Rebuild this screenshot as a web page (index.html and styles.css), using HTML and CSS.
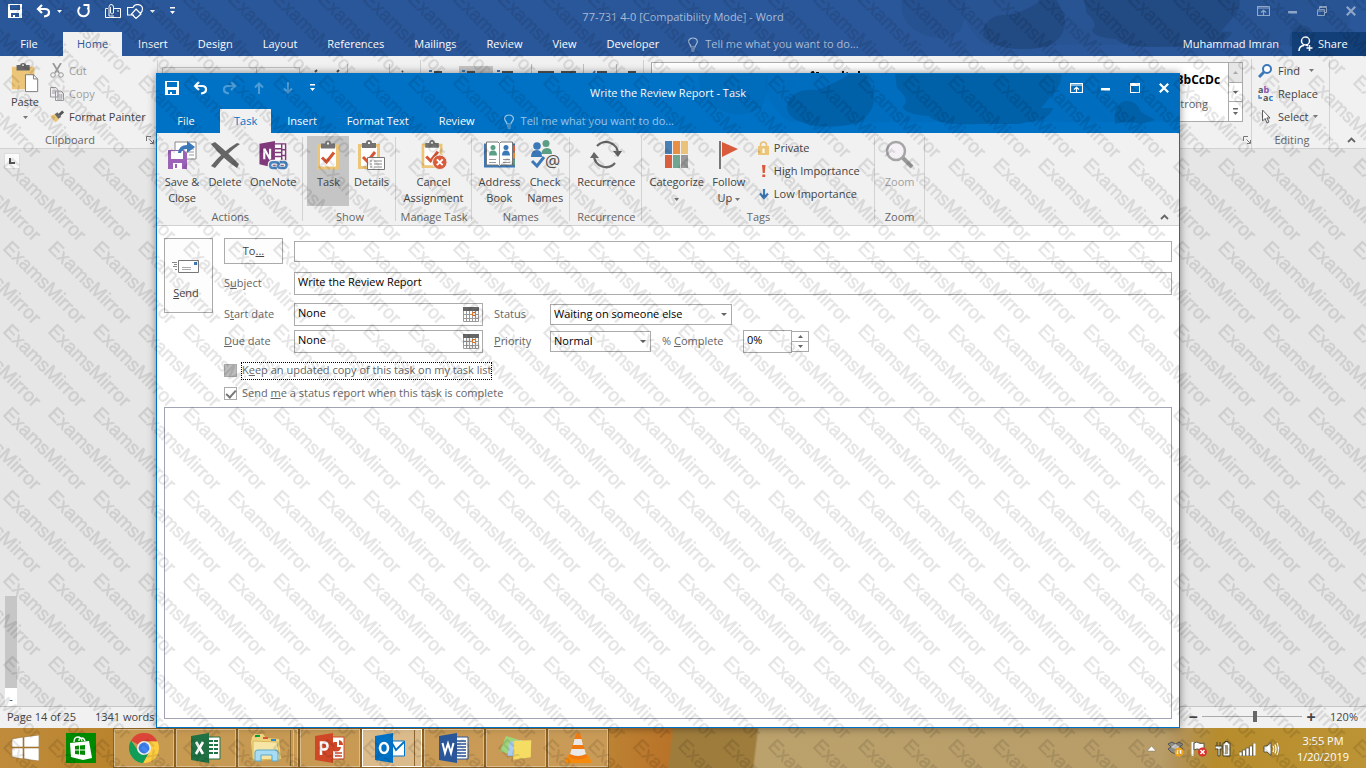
FILE: index.html
```html
<!DOCTYPE html>
<html lang="en">
<head>
<meta charset="utf-8">
<title>Write the Review Report - Task</title>
<link rel="stylesheet" href="styles.css">
</head>
<body>
<svg class="defs" aria-hidden="true">
  <defs>
    <symbol id="i-art" viewBox="0 0 490 60">
      <path d="M10 0H78Q80 20 72 34Q50 46 32 36Q8 28 10 0Z" opacity=".35"/>
      <path d="M98 30Q104 14 128 16Q150 8 160 0H176Q190 22 182 36Q176 46 166 50Q130 56 112 48Q96 42 98 30Z"/>
      <path d="M206 0H372Q374 10 362 22L352 34H364Q362 42 350 46L330 50H290Q250 52 240 42Q214 40 214 32Q222 26 208 14Z"/>
      <path d="M426 50Q424 30 436 27Q448 26 452 38L466 46L452 50Q438 46 426 50Z"/>
      <path d="M78 0H490V48H100Q70 24 78 0Z" opacity=".25"/>
    </symbol>
    <symbol id="i-save" viewBox="0 0 14 14">
      <path d="M0 0H14V14H0ZM2 1V6H12V1ZM3 9V13H5V11H7V13H11V9Z" fill="currentColor" fill-rule="evenodd"/>
    </symbol>
    <symbol id="i-undo" viewBox="0 0 15 14">
      <path d="M2 5H9Q13 5 13 8.500Q13 12 8 12.500M6 1L2 5L6 9" fill="none" stroke="currentColor" stroke-width="2.200"/>
    </symbol>
    <symbol id="i-down" viewBox="0 0 5 3"><path d="M0 0H5L2.500 3Z" fill="currentColor"/></symbol>
    <symbol id="i-more" viewBox="0 0 7 8"><path d="M1 0H6V1.500H1ZM1 4H6L3.500 7Z" fill="currentColor"/></symbol>
    <symbol id="i-bulb" viewBox="0 0 12 15">
      <path d="M4 10Q4 8.500 2.500 7Q1 5 2 3Q3 1 6 1Q9 1 10 3Q11 5 9.500 7Q8 8.500 8 10ZM4 12H8M4.500 14H7.500" fill="none" stroke="currentColor" stroke-width="1.200"/>
    </symbol>
    <symbol id="i-ribbon" viewBox="0 0 13 10">
      <path d="M.5.5H12.500V9.500H.5ZM.5 2H12.500M6.500 9V4.500M4 6.500L6.500 4.200L9 6.500" fill="none" stroke="currentColor" stroke-width="1.200"/>
    </symbol>
    <symbol id="i-min" viewBox="0 0 10 10"><path d="M0 5H9V7.500H0Z" fill="currentColor"/></symbol>
    <symbol id="i-close" viewBox="0 0 10 10"><path d="M.8.8L9.200 9.200M9.200.8L.8 9.200" stroke="currentColor" stroke-width="2.200"/></symbol>
    <symbol id="i-up" viewBox="0 0 9 6"><path d="M1 5L4.500 1.500L8 5" fill="none" stroke="#666" stroke-width="1.800"/></symbol>
    <symbol id="i-launch" viewBox="0 0 8 8"><path d="M.5 5V.5H5M3.500 3.500L7 7M7.500 4V7.500H4" fill="none" stroke="#777"/></symbol>
    <symbol id="i-clip" viewBox="0 0 22 29">
      <path d="M0 4H22V29H0Z" fill="#ecc579"/><path d="M3 7H19V26H3Z" fill="#fff"/>
      <path d="M4 3H8Q8 0 11 0Q14 0 14 3H18V8H4Z" fill="#737373"/><path d="M10 2H12V4H10Z" fill="#eee"/>
      <path d="M5 17L9.500 21.500L17 12" fill="none" stroke="#d65532" stroke-width="3"/>
    </symbol>
    <symbol id="i-cal" viewBox="0 0 16 15">
      <path d="M0 0H16V15H0Z" fill="#fff"/><path d="M0 0H16V4H0Z" fill="#666"/>
      <path d="M.5 4V14.500H15.500V4M3.500 4V14M6.500 4V14M9.500 4V14M12.500 4V14M1 7.500H15M1 11.500H15" fill="none" stroke="#999"/>
      <path d="M9.500 5.500H12.500V8.500H9.500Z" fill="#fff" stroke="#e0701e"/>
    </symbol>
    <g id="mark"><text transform="rotate(45)">ExamsMirror</text></g>
    <pattern id="marks" width="45" height="83" patternUnits="userSpaceOnUse">
      <use href="#mark" x="2" y="0"/><use href="#mark" x="-43" y="0"/><use href="#mark" x="-88" y="0"/><use href="#mark" x="47" y="0"/>
      <use href="#mark" x="2" y="83"/><use href="#mark" x="-43" y="83"/><use href="#mark" x="-88" y="83"/><use href="#mark" x="47" y="83"/>
    </pattern>
  </defs>
</svg>

<div class="desktop">
  <div class="word">
    <header class="app-head word-head">
      <svg class="art"><use href="#i-art"/></svg>
      <div class="titlebar word-title">
        <div class="quick word-quick">
          <button aria-label="Save"><svg width="14" height="14"><use href="#i-save"/></svg></button>
          <button aria-label="Undo"><svg width="15" height="14"><use href="#i-undo"/></svg><svg width="5" height="3"><use href="#i-down"/></svg></button>
          <button aria-label="Repeat"><svg width="15" height="14" viewBox="0 0 15 14"><path d="M4 3A5.300 5.300 0 1 0 11.500 3.500M7.500 1H12.500V6" fill="none" stroke="currentColor" stroke-width="2"/></svg></button>
          <span class="pair">
            <button aria-label="Attach"><svg width="16" height="14" viewBox="0 0 16 14"><path d="M3 4.500H.5V13.500H15.500V4.500H9M12 7H14M4 12V3Q4 .5 6 .5Q8.500.5 8.500 3V8Q8.500 10 7 10Q5.500 10 5.500 8V3M4 12H9" fill="none" stroke="currentColor"/></svg></button>
            <button aria-label="Shapes"><svg width="17" height="15" viewBox="0 0 17 15"><path d="M7 11H.5V3.500H6M6 3.500Q7 .5 10.500.5Q15.500 1 15.500 5Q15.500 8 13 9.500M9 5L14 10L9 14.500L4.500 10Z" fill="none" stroke="currentColor" stroke-width="1.200"/></svg><svg width="5" height="3"><use href="#i-down"/></svg></button>
          </span>
          <button aria-label="Customize toolbar"><svg width="7" height="8"><use href="#i-more"/></svg></button>
        </div>
        <div class="caption word-caption">77-731 4-0 [Compatibility Mode] - Word</div>
        <div class="controls word-controls">
          <button aria-label="Ribbon options"><svg width="13" height="10"><use href="#i-ribbon"/></svg></button>
          <button aria-label="Minimize"><svg width="10" height="10"><use href="#i-min"/></svg></button>
          <button aria-label="Restore"><svg width="10" height="10" viewBox="0 0 10 10"><path d="M.5 3.500H7.500V9.500H.5ZM.5 5H7.500M2.500 3V.5H9.500V6.500H8M2.500 1.500H9.500" fill="none" stroke="currentColor"/></svg></button>
          <button aria-label="Close"><svg width="10" height="10"><use href="#i-close"/></svg></button>
        </div>
      </div>
      <nav class="tabs">
        <button class="file">File</button>
        <button class="on word-on">Home</button><button>Insert</button><button>Design</button><button>Layout</button><button>References</button><button>Mailings</button><button>Review</button><button>View</button><button>Developer</button>
        <button class="tell word-tell"><svg width="12" height="15"><use href="#i-bulb"/></svg>Tell me what you want to do...</button>
        <span class="user">Muhammad Imran</span>
        <button class="share"><svg width="16" height="16" viewBox="0 0 16 16"><circle cx="7.500" cy="5" r="4" fill="none" stroke="#fff" stroke-width="1.500"/><path d="M1 15Q1 10 6 9.500M8 9Q9 9 10 10M11.500 9V15M8.500 12H14.500" fill="none" stroke="#fff" stroke-width="1.500"/></svg>Share</button>
      </nav>
    </header>

    <section class="word-ribbon">
      <div class="group clip-group">
        <div class="group-body">
          <button class="big paste"><svg width="30" height="32" viewBox="0 0 30 32"><path d="M1 4H25V28H1Z" fill="#ecc579"/><path d="M6 2H10Q10 0 13 0Q16 0 16 2H20V8H6Z" fill="#666"/><path d="M12 1.500H14V3H12Z" fill="#fff"/><path d="M15.500 12.500H24L28.500 17V30.500H15.500Z" fill="#fff" stroke="#777"/><path d="M24 12V17H28" fill="none" stroke="#777"/></svg><span>Paste</span><svg class="arrow" width="5" height="3"><use href="#i-down"/></svg></button>
          <div class="rows">
            <button class="dim"><svg width="14" height="15" viewBox="0 0 14 15"><path d="M3 0L9 10M11 0L5 10" stroke="#999" stroke-width="1.800"/><circle cx="3" cy="12" r="2.300" fill="none" stroke="#999"/><circle cx="11" cy="12" r="2.300" fill="none" stroke="#999"/></svg>Cut</button>
            <button class="dim"><svg width="14" height="14" viewBox="0 0 14 14"><path d="M.5.5H6L8 3V10H.5ZM5.500 4H11L13.500 6.500V13.500H5.500Z" fill="#f1eff3" stroke="#999"/><path d="M2 4H5M2 6H5M7 8H12M7 10H12M7 12H12" stroke="#999"/></svg>Copy</button>
            <button><svg width="14" height="13" viewBox="0 0 15 13"><path d="M0 6L5 4L10 9L6 13Z" fill="#ecc579"/><path d="M5 4L8 2L12 7L9 9Z" fill="#666"/><path d="M10 5L14 1" stroke="#555" stroke-width="3"/></svg>Format Painter</button>
          </div>
        </div>
        <div class="group-name">Clipboard<svg class="launch" width="8" height="8"><use href="#i-launch"/></svg></div>
      </div>
      <svg class="strip" width="486" height="20" viewBox="0 0 486 20"><path d="M301 10H335V20H301Z" fill="#c5c5c5"/><path d="M4.500 20V11.500H141.500V20M98.500 11V20M189.500 8V20M231.500 8V20M373.500 8V20M425.500 8V20M458.500 8V20" fill="none" stroke="#c0c0c0"/><path d="M262.500 4V20M485.500 4V20" stroke="#d0d0d0"/><path d="M271 15H274M304 15H307M339 15H342M437 15L435 18" stroke="#4078b8" stroke-width="2"/><path d="M276 16H284M309 16H317M344 16H355M380 16H396M403 16H418M439 16H449M470 16H478M157 16L159 14M179 16L181 14M244 16L245 15" stroke="#555" stroke-width="2"/></svg>
      <div class="gallery">
        <svg class="peek-text" width="60" height="6" viewBox="0 0 60 6"><path d="M1 2L3 1L5 4M7 4V2H9M33 0V6M36 3L38 2M49 0V6" fill="none" stroke="#111" stroke-width="2"/></svg>
        <div class="style-item"><b>AaBbCcDc</b><span>Strong</span></div>
        <div class="gallery-nav"><button class="off" aria-label="Previous styles"><svg class="flip" width="5" height="3"><use href="#i-down"/></svg></button><button aria-label="Next styles"><svg width="5" height="3"><use href="#i-down"/></svg></button><button aria-label="All styles"><svg width="7" height="8"><use href="#i-more"/></svg></button></div>
      </div>
      <div class="styles-end"><svg width="8" height="8"><use href="#i-launch"/></svg></div>
      <div class="group edit-group">
        <div class="group-body"><div class="rows">
          <button><svg width="15" height="14" viewBox="0 0 15 14"><circle cx="9" cy="5" r="4" fill="#fff" stroke="#3b78b8" stroke-width="2"/><path d="M6 8L1 13" stroke="#3b78b8" stroke-width="3"/></svg>Find <svg class="arrow gap" width="5" height="3"><use href="#i-down"/></svg></button>
          <button><svg width="15" height="17" viewBox="0 0 15 17"><text x="0" y="8" class="tiny">a<tspan fill="#8a4fb0">b</tspan></text><text x="5" y="16" class="tiny">a<tspan fill="#3b78b8">c</tspan></text><path d="M1 10V13H4" fill="none" stroke="#3b78b8" stroke-width="1.300"/></svg>Replace</button>
          <button><svg width="15" height="15" viewBox="0 0 15 15"><path d="M4.500 1V12L7 9.500L9 14L11 13L9 9H12Z" fill="#fff" stroke="#666"/></svg>Select<svg class="arrow" width="5" height="3"><use href="#i-down"/></svg></button>
        </div></div>
        <div class="group-name">Editing</div>
      </div>
      <button class="fold" aria-label="Collapse the ribbon"><svg width="9" height="6"><use href="#i-up"/></svg></button>
    </section>

    <main class="document">
      <div class="ruler-corner"><svg width="6" height="6" viewBox="0 0 6 6"><path d="M1 0V5H6" fill="none" stroke="#555" stroke-width="2"/></svg></div>
      <div class="v-ruler"><div class="v-margin"></div><div class="v-page">-</div></div>
    </main>
    <footer class="status">
      <span>Page 14 of 25</span><span>1341 words</span>
      <div class="zoomer"><button aria-label="Zoom out">−</button><input type="range" aria-label="Zoom" min="0" max="100" value="53"><button aria-label="Zoom in">+</button><span>120%</span></div>
    </footer>
  </div>

  <section class="task-window">
    <header class="app-head task-head">
      <svg class="art"><use href="#i-art"/></svg>
      <div class="titlebar task-title">
        <div class="quick task-quick">
          <button aria-label="Save"><svg width="14" height="14"><use href="#i-save"/></svg></button>
          <button aria-label="Undo"><svg width="15" height="14"><use href="#i-undo"/></svg></button>
          <button class="faint" aria-label="Redo"><svg class="mirror" width="15" height="14"><use href="#i-undo"/></svg></button>
          <button class="faint" aria-label="Previous item"><svg width="10" height="12" viewBox="0 0 10 12"><path d="M5 12V2M1 5.500L5 1.500L9 5.500" fill="none" stroke="currentColor" stroke-width="2"/></svg></button>
          <button class="faint" aria-label="Next item"><svg width="10" height="12" viewBox="0 0 10 12"><path d="M5 0V10M1 6.500L5 10.500L9 6.500" fill="none" stroke="currentColor" stroke-width="2"/></svg></button>
          <button class="narrow" aria-label="Customize toolbar"><svg width="7" height="8"><use href="#i-more"/></svg></button>
        </div>
        <div class="caption">Write the Review Report - Task</div>
        <div class="controls">
          <button aria-label="Ribbon options"><svg width="13" height="10"><use href="#i-ribbon"/></svg></button>
          <button aria-label="Minimize"><svg width="10" height="10"><use href="#i-min"/></svg></button>
          <button aria-label="Maximize"><svg width="10" height="10" viewBox="0 0 10 10"><path d="M0 0H10V10H0ZM1 3V9H9V3Z" fill="currentColor" fill-rule="evenodd"/></svg></button>
          <button aria-label="Close"><svg width="10" height="10"><use href="#i-close"/></svg></button>
        </div>
      </div>
      <nav class="tabs">
        <button class="file">File</button>
        <button class="on task-on">Task</button><button>Insert</button><button>Format Text</button><button>Review</button>
        <button class="tell task-tell"><svg width="12" height="15"><use href="#i-bulb"/></svg>Tell me what you want to do...</button>
      </nav>
    </header>

    <section class="task-ribbon">
      <div class="group">
        <div class="group-body">
          <button class="big"><svg width="30" height="30" viewBox="0 0 30 30"><path d="M8 2H29V19H8Z" fill="#fff" stroke="#888"/><path d="M19 12H27M22 15H27M22 9H27" stroke="#999"/><path d="M1 10H17L20 13V29H1Z" fill="#9b62b8"/><path d="M4 11H16V19H4Z" fill="#fff"/><path d="M6 23H15V29H6Z" fill="#fff"/><path d="M8 24H10V28H8Z" fill="#9b62b8"/><path d="M11 13Q12 5 20 5V1L28 7L20 13V9Q15 9 14 13Z" fill="#3b78b8"/></svg><span>Save &amp;<br>Close</span></button>
          <button class="big"><svg width="30" height="30" viewBox="0 0 30 30"><path d="M1 4L5 2Q15 10 29 24L27 28Q12 18 1 4Z" fill="#666"/><path d="M27 3L30 4Q16 14 5 28L1 26Q12 12 27 3Z" fill="#666"/></svg><span>Delete</span></button>
          <button class="big"><svg width="30" height="31" viewBox="0 0 30 31"><path d="M14 4H28V26H14Z" fill="#fff" stroke="#80397b" stroke-width="1.500"/><path d="M17 9H24M17 13H24M17 17H24M24 4V24M24 10H28M24 16H28" stroke="#80397b" stroke-width="1.500"/><path d="M1 4L17 1V29L1 25Z" fill="#80397b"/><path d="M6 20V9L12 20V9" fill="none" stroke="#fff" stroke-width="2.200"/><path d="M19 29H15Q12 29 12 26Q12 23 15 23H18Q21 23 21 26M20 26Q20 29 23 29H26Q29 29 29 26Q29 23 26 23H22" fill="none" stroke="#f1f1f1" stroke-width="5"/><path d="M19 29H15Q12 29 12 26Q12 23 15 23H18Q21 23 21 26M20 26Q20 29 23 29H26Q29 29 29 26Q29 23 26 23H22" fill="none" stroke="#4a83bd" stroke-width="2.500"/></svg><span>OneNote</span></button>
        </div><div class="group-name">Actions</div>
      </div>
      <div class="group">
        <div class="group-body">
          <button class="big pressed" aria-pressed="true"><svg width="22" height="29"><use href="#i-clip"/></svg><span>Task</span></button>
          <button class="big"><svg width="30" height="30" viewBox="0 0 30 30"><use href="#i-clip" x="2" width="22" height="29"/><path d="M11.500 17.500H28.500V29.500H11.500Z" fill="#fff" stroke="#777"/><path d="M14 21H16M14 24H16M14 27H16M18 21H26M18 24H26M18 27H26" stroke="#888"/></svg><span>Details</span></button>
        </div><div class="group-name">Show</div>
      </div>
      <div class="group">
        <div class="group-body">
          <button class="big"><svg width="30" height="31" viewBox="0 0 30 31"><use href="#i-clip" x="3" width="22" height="29"/><circle cx="22" cy="23" r="7.500" fill="#d95b3c" stroke="#f1f1f1"/><path d="M19 20L25 26M25 20L19 26" stroke="#fff" stroke-width="2"/></svg><span>Cancel<br>Assignment</span></button>
        </div><div class="group-name">Manage Task</div>
      </div>
      <div class="group">
        <div class="group-body">
          <button class="big"><svg width="31" height="29" viewBox="0 0 31 29"><path d="M0 3H31V27H0Z" fill="#3b78b8"/><path d="M28 5H31V11H28Z" fill="#d95b3c"/><path d="M28 12H31V18H28Z" fill="#e8872e"/><path d="M28 19H31V25H28Z" fill="#5a9e85"/><path d="M2.500 1.500H14L15.500 3L17 1.500H28.500V24.500H17L15.500 26L14 24.500H2.500Z" fill="#fff" stroke="#777"/><path d="M15.500 3V25M5 19H12M5 22H12M19 19H26M19 22H26" stroke="#999"/><circle cx="9" cy="7" r="2.500" fill="#5a9e85"/><path d="M5 15Q5 10 9 10Q13 10 13 15Z" fill="#5a9e85"/><circle cx="22" cy="7" r="2.500" fill="#3b78b8"/><path d="M18 15Q18 10 22 10Q26 10 26 15Z" fill="#3b78b8"/></svg><span>Address<br>Book</span></button>
          <button class="big"><svg width="31" height="30" viewBox="0 0 31 30"><circle cx="16" cy="3.500" r="3.500" fill="#5a9e85"/><path d="M11 14Q12 8 17 8Q22 8 22 14Z" fill="#5a9e85"/><circle cx="7" cy="6" r="3.800" fill="#3b78b8"/><path d="M1 17Q1 10 7 10Q12 10 12 17Z" fill="#3b78b8"/><path d="M2 21L7 26L14 17" fill="none" stroke="#3b78b8" stroke-width="3"/><text x="15" y="27" class="at">@</text></svg><span>Check<br>Names</span></button>
        </div><div class="group-name">Names</div>
      </div>
      <div class="group">
        <div class="group-body">
          <button class="big"><svg width="32" height="30" viewBox="0 0 32 30"><path d="M7 6A12 12 0 0 1 28 14M25 23A12 12 0 0 1 4 16" fill="none" stroke="#666" stroke-width="2.300"/><path d="M23 11L28 17L32 11ZM0 18L4 12L9 18Z" fill="#666"/></svg><span>Recurrence</span></button>
        </div><div class="group-name">Recurrence</div>
      </div>
      <div class="group tags-group">
        <div class="group-body">
          <button class="big"><svg width="23" height="28" viewBox="0 0 23 28"><path d="M0 0H7V13H0Z" fill="#4a80b8"/><path d="M8 0H15V13H8Z" fill="#e88f45"/><path d="M16 0H23V13H16Z" fill="#ebc27a"/><path d="M0 14H7V27H0Z" fill="#d6603f"/><path d="M8 14H15V27H8Z" fill="#6fa591"/><path d="M16 14H23V27H16Z" fill="#999"/></svg><span>Categorize<br><svg class="arrow" width="5" height="3"><use href="#i-down"/></svg></span></button>
          <button class="big"><svg width="22" height="28" viewBox="0 0 22 28"><path d="M1 0H3V28H1Z" fill="#777"/><path d="M4 1L20 8L4 16Z" fill="#d95b3c"/></svg><span>Follow<br>Up <svg class="arrow" width="5" height="3"><use href="#i-down"/></svg></span></button>
          <div class="rows">
            <button><svg width="11" height="14" viewBox="0 0 11 14"><path d="M2.500 7V4Q2.500 1 5.500 1Q8.500 1 8.500 4V7" fill="none" stroke="#e9bf73" stroke-width="1.500"/><path d="M0 5H11V14H0Z" fill="#ecc579"/><path d="M4.500 7.500H6.500V12H4.500Z" fill="#fff"/></svg>Private</button>
            <button><svg width="11" height="14" viewBox="0 0 11 14"><path d="M4 1H7.500L6.800 9H4.700ZM4.300 10.500H7.200V13H4.300Z" fill="#d95b3c"/></svg>High Importance</button>
            <button><svg width="11" height="14" viewBox="0 0 11 14"><path d="M6 2V11M2 6.500L6 11L10 6.500" fill="none" stroke="#3b78b8" stroke-width="2.200"/></svg>Low Importance</button>
          </div>
        </div><div class="group-name">Tags</div>
      </div>
      <div class="group">
        <div class="group-body">
          <button class="big dim"><svg width="30" height="30" viewBox="0 0 30 30"><path d="M17 17L27 27" stroke="#999" stroke-width="4"/><circle cx="11" cy="11" r="9" fill="#f4f0f6" stroke="#a5a5a5" stroke-width="2.500"/></svg><span>Zoom</span></button>
        </div><div class="group-name">Zoom</div>
      </div>
      <button class="fold" aria-label="Collapse the ribbon"><svg width="9" height="6"><use href="#i-up"/></svg></button>
    </section>

    <form class="task-form">
      <div class="head">
        <button type="button" class="send"><svg width="28" height="15" viewBox="0 0 28 15"><path d="M6.500 1.500H26.500V13.500H6.500Z" fill="#fff" stroke="#777"/><path d="M22 3H25V6H22Z" fill="#3b78b8"/><path d="M10 8.500H19M10 10.500H19" stroke="#aaa"/><path d="M0 3.500H5M2 5.500H5M1 7.500H5M3 10.500H5" stroke="#888"/></svg><span><u>S</u>end</span></button>
        <div class="fields">
          <div class="line line-to"><button type="button" class="to">To<u>...</u></button><input class="wide to-input" aria-label="To"></div>
          <div class="line line-gap"><label for="subject">S<u>u</u>bject</label><input class="wide" id="subject" value="Write the Review Report"></div>
          <div class="line line-gap"><label for="start">S<u>t</u>art date</label><span class="date"><input id="start" value="None"><button type="button" aria-label="Pick start date"><svg width="16" height="15"><use href="#i-cal"/></svg></button></span><label class="second" for="status">Status</label><span class="drop drop-long"><select id="status"><option>Waiting on someone else</option><option>Not Started</option></select></span></div>
          <div class="line line-near"><label for="due"><u>D</u>ue date</label><span class="date"><input id="due" value="None"><button type="button" aria-label="Pick due date"><svg width="16" height="15"><use href="#i-cal"/></svg></button></span><label class="second" for="priority"><u>P</u>riority</label><span class="drop"><select id="priority"><option>Normal</option><option>High</option></select></span><label class="percent" for="complete">% <u>C</u>omplete</label><input class="amount" id="complete" value="0%"><span class="spin"><button type="button" aria-label="More"><svg class="flip" width="5" height="3"><use href="#i-down"/></svg></button><button type="button" aria-label="Less"><svg width="5" height="3"><use href="#i-down"/></svg></button></span></div>
          <div class="check check-first"><input type="checkbox" id="keep" class="mixed"><label for="keep" class="focus">K<u>e</u>ep an updated copy of this task on my task list</label></div>
          <div class="check"><input type="checkbox" id="report" checked><label for="report">Send <u>m</u>e a status report when this task is complete</label></div>
        </div>
      </div>
      <textarea class="notes" aria-label="Notes"></textarea>
    </form>
  </section>
</div>

<footer class="taskbar">
  <button class="plain start" aria-label="Start"><svg width="27" height="26" viewBox="0 0 27 26"><path d="M0 4L11 2V12H0ZM12 2L27 0V12H12ZM0 13H11V24L0 22ZM12 13H27V26L12 24Z" fill="#fff" stroke="#8a5b1c" stroke-width=".5"/></svg></button>
  <button class="plain store" aria-label="Store"><svg width="30" height="30" viewBox="0 0 30 30"><path d="M0 0H30V30H0Z" fill="#008a00"/><path d="M4 10L23 8L26 25L17 27L5 24Z" fill="#fff"/><path d="M8 9Q8 4 12 4Q15 4 16 8M13 8Q13 4 16 5Q18 5 19 8" fill="none" stroke="#fff" stroke-width="1.300"/><path d="M9 13L13 12.500V16.500H9ZM14 12.500L19 12V16.500H14ZM9 17.500H13V21.500L9 21ZM14 17.500H19V22L14 21.500Z" fill="#008a00"/></svg></button>
  <div class="apps">
    <button aria-label="Chrome"><svg width="30" height="30" viewBox="0 0 30 30"><path d="M15 15L2 7.500A15 15 0 0 1 28 7.500L28 8.500H15Z" fill="#db4437"/><path d="M15 15V8.500H28.500A15 15 0 0 1 14 30L20.600 18.200Z" fill="#ffcd40"/><path d="M15 15L20.600 18.200L14 30A15 15 0 0 1 2 7.500L9.400 18.200Z" fill="#0f9d58"/><circle cx="15" cy="15" r="7" fill="#f1f1f1"/><circle cx="15" cy="15" r="5.400" fill="#4285f4"/></svg></button>
    <button aria-label="Excel"><svg width="30" height="30" viewBox="0 0 30 30"><path d="M16 4H29V26H16Z" fill="#fff" stroke="#207245"/><path d="M18 8H22M18 12H22M18 16H22M18 20H22M23 8H27M23 12H27M23 16H27M23 20H27" stroke="#207245" stroke-width="2"/><path d="M0 3L18 0V30L0 27Z" fill="#207245"/><path d="M5 9L12 21M12 9L5 21" stroke="#fff" stroke-width="2.600"/></svg></button>
    <button class="stack" aria-label="File Explorer"><svg width="32" height="30" viewBox="0 0 32 30"><path d="M2 4L5 1H13L16 5L29 6L31 26L3 28L1 9Z" fill="#edd37c"/><path d="M3 8L27 9L30 26L3 27Z" fill="#f6e5a4" stroke="#d9b95c"/><path d="M5 2H10V4H5Z" fill="#0a4"/><path d="M13 4H18V6H13Z" fill="#d53"/><path d="M21 6H26V8H21Z" fill="#38c"/><path d="M5 28V19Q5 17 8 17H25Q28 17 28 19V28H22V22H11V28Z" fill="#a7dcf2" stroke="#5aa9cc"/></svg></button>
    <button aria-label="PowerPoint"><svg width="30" height="30" viewBox="0 0 30 30"><path d="M16 4H29V26H16Z" fill="#fff" stroke="#d04727"/><path d="M20 20H27M20 23H27" stroke="#d04727" stroke-width="1.500"/><path d="M19 9A5 5 0 1 0 26 14H22V9ZM24 7V12H28Q28 8 24 7Z" fill="#d04727"/><path d="M0 3L18 0V30L0 27Z" fill="#d04727"/><path d="M6 22V9.500H9Q12.500 9.500 12.500 13Q12.500 16.500 9 16.500H6" fill="none" stroke="#fff" stroke-width="2.500"/></svg></button>
    <button class="stack current" aria-label="Outlook"><svg width="30" height="30" viewBox="0 0 30 30"><path d="M15 8H29.500V23H15Z" fill="#fff" stroke="#0072c6"/><path d="M17 10L21 17L29 9" fill="none" stroke="#0072c6" stroke-width="1.800"/><path d="M0 3L18 0V30L0 27Z" fill="#0072c6"/><ellipse cx="9" cy="15" rx="4" ry="5" fill="none" stroke="#fff" stroke-width="2.600"/></svg></button>
    <button aria-label="Word"><svg width="30" height="30" viewBox="0 0 30 30"><path d="M16 4H29V26H16Z" fill="#fff" stroke="#2a579a"/><path d="M18 8H27M18 11H27M18 14H27M18 17H27M18 20H27M18 23H27" stroke="#2a579a" stroke-width="1.500"/><path d="M0 3L18 0V30L0 27Z" fill="#2a579a"/><path d="M3.500 10L6 20L9 10.500L12 20L14.500 10" fill="none" stroke="#fff" stroke-width="2"/></svg></button>
    <button aria-label="Sticky Notes"><svg width="32" height="26" viewBox="0 0 32 26"><path d="M6 1L19 5L14 21L0 16Z" fill="#9fd67c"/><path d="M9 7L22 5L24 21L8 21Z" fill="#a9cdf0"/><path d="M15 5L32 6L30 23L12 24Z" fill="#f5dc62" transform="rotate(-5 22 14)"/></svg></button>
    <button aria-label="VLC"><svg width="28" height="30" viewBox="0 0 28 30"><path d="M4 22H24L27 28V30H1V28Z" fill="#f58a0c"/><path d="M12 1Q14-1 16 1L23 24Q14 29 5 24Z" fill="#f07a10"/><path d="M10.500 6H17.500L19 12H9ZM7.500 16H20.500L22 21Q14 25 6 21Z" fill="#e9e9e9"/></svg></button>
  </div>
  <div class="tray">
    <button aria-label="Show hidden icons"><svg width="9" height="6" viewBox="0 0 9 6"><path d="M4.500 0L9 5H0Z" fill="#fff" stroke="#776" stroke-width=".5"/></svg></button>
    <button aria-label="Dropbox"><svg width="17" height="16" viewBox="0 0 17 16"><path d="M1 3L5 1L8.500 3L12 1L16 3.500L12.500 6L16 8L12 11L8.500 13L4 11L1 8L4 6Z" fill="#8c8c84" stroke="#555"/><path d="M4 6L8.500 3L12.500 6L8.500 8.500Z" fill="#ccc"/><circle cx="12" cy="11" r="4.500" fill="#f0a51c"/><path d="M10.500 9V13M13.500 9V13" stroke="#fff" stroke-width="1.500"/></svg></button>
    <button aria-label="Action Center"><svg width="17" height="16" viewBox="0 0 17 16"><path d="M1.500 1V15" stroke="#fff" stroke-width="2"/><path d="M3 2Q6 0 8 2Q10 3 13 2V9Q9 10 7 8Q5 8 3 9Z" fill="#fff" stroke="#554"/><circle cx="11.500" cy="11" r="4.500" fill="#d9302c"/><path d="M9.500 9L13.500 13M13.500 9L9.500 13" stroke="#fff" stroke-width="1.500"/></svg></button>
    <button aria-label="Battery"><svg width="16" height="16" viewBox="0 0 16 16"><path d="M2 1V5M5 1V5M0 5H7V8H5V15H3V8H0Z" fill="#fff" stroke="#443"/><path d="M8 2H10V.5H13V2H15V15H8Z" fill="#fff" stroke="#443"/><path d="M10 4H13V13H10Z" fill="#aaa07c"/></svg></button>
    <button aria-label="Network"><svg width="17" height="13" viewBox="0 0 17 13"><path d="M0 9H3V13H0ZM3.500 7H6.500V13H3.500ZM7 5H10V13H7ZM10.500 3H13.500V13H10.500ZM14 0H17V13H14Z" fill="#fff" stroke="#443" stroke-width=".6"/></svg></button>
    <button aria-label="Volume"><svg width="16" height="14" viewBox="0 0 16 14"><path d="M1 4H4L8 .5V13.500L4 10H1Z" fill="#fff" stroke="#443" stroke-width=".8"/><path d="M10 4Q11.500 7 10 10M12 2.500Q14 7 12 11.500M14 1Q17 7 14 13" fill="none" stroke="#fff" stroke-width="1.200"/></svg></button>
    <div class="clock"><span>3:55 PM</span><span>1/20/2019</span></div>
  </div>
</footer>
<svg class="watermark" aria-hidden="true"><rect width="100%" height="100%" fill="url(#marks)"/></svg>
</body>
</html>
```
FILE: styles.css
```css
* { box-sizing: border-box; }

body {
  margin: 0;
  height: 100vh;
  display: flex;
  flex-direction: column;
  overflow: hidden;
  font: 11px/16px "Open Sans", "Noto Sans", sans-serif;
  color: #444;
}

button, input, select, textarea { font: inherit; color: inherit; }
button { border: 0; padding: 0; background: none; display: flex; align-items: center; justify-content: center; white-space: nowrap; }
svg { flex: none; }
.defs { position: absolute; width: 0; height: 0; }
.watermark { position: fixed; inset: 0; width: 100%; height: 100%; pointer-events: none; z-index: 9; opacity: 0.1; }
#mark text { font: 19px "Liberation Sans", Arial, sans-serif; fill: #000; stroke: #000; stroke-width: 0.6px; }

.desktop { flex: 1; position: relative; min-height: 0; }
.word { height: 100%; display: flex; flex-direction: column; background: #e6e6e6; }

/* Shared title bars and tabs */
.app-head { position: relative; color: #fff; }
.word-head { background: #2a579a; }
.task-head { background: #0072c6; }
.art { position: absolute; top: 0; right: 0; width: 490px; height: 60px; pointer-events: none; }
.word-head .art { fill: #224a83; height: 56px; }
.task-head .art { fill: #0061a9; }
.titlebar { position: relative; display: grid; grid-template-columns: 1fr auto 1fr; }
.word-title { height: 32px; }
.task-title { height: 35px; }
.quick { display: flex; }
.word-quick { height: 22px; padding-left: 8px; gap: 14px; }
.word-quick button { gap: 6px; }
.pair { display: flex; gap: 6px; }
.task-quick { height: 28px; }
.task-quick button { width: 29px; }
.task-quick .narrow { width: 20px; }
.faint { opacity: 0.3; }
.mirror { transform: scaleX(-1); }
.flip { transform: rotate(180deg); }
.caption { align-self: center; padding-top: 2px; }
.word-caption { color: #a9bcd7; }
.controls { display: flex; justify-content: flex-end; height: 28px; padding-right: 1px; }
.controls button { width: 29px; }
.word-controls { height: 22px; color: #8fa6c8; }
.tabs { position: relative; display: flex; height: 24px; gap: 2px; }
.tabs button { padding: 0 14px; }
.tabs .file { width: 58px; margin-right: 3px; padding: 0; }
.tabs .on { background: #f1f1f1; }
.tabs .word-on { color: #2a579a; }
.tabs .task-on { color: #0072c6; }
.tabs .tell { gap: 6px; padding: 0 12px; }
.word-tell { color: #a9bcd7; }
.task-tell { color: #99c7e8; }
.user { margin-left: auto; padding-right: 11px; line-height: 24px; }
.tabs .share { width: 74px; padding: 0 0 0 6px; gap: 4px; justify-content: flex-start; background: #133f78; }

/* Ribbon groups */
.group { position: relative; display: flex; flex-direction: column; padding: 0 4px; }
.group::after { content: ""; position: absolute; right: 0; top: 1px; bottom: 4px; width: 1px; background: #d2d2d2; }
.group-body { display: flex; flex: 1; gap: 1px; }
.group-name { position: relative; text-align: center; line-height: 16px; color: #666; }
.big { flex-direction: column; justify-content: flex-start; gap: 4px; min-width: 42px; padding: 4px 3px 0; line-height: 16px; }
.big > svg { height: 30px; }
.big.pressed { height: 70px; background: #c5c5c5; }
.rows { display: flex; flex-direction: column; }
.rows button { height: 23px; gap: 5px; justify-content: flex-start; }
.dim { color: #a0a0a0; }
.arrow { color: #777; vertical-align: middle; }
.rows .gap { margin-left: 4px; }
.fold { margin: auto 10px 5px auto; }

.word-ribbon { display: flex; height: 93px; padding-top: 3px; background: #f1f1f1; border-bottom: 1px solid #d2d2d2; }
.clip-group { width: 158px; }
.clip-group .group-name { padding-right: 18px; }
.clip-group .rows { padding-left: 3px; }
.big.paste { gap: 1px; }
.paste .arrow { height: 3px; margin-top: 5px; }
.launch { position: absolute; right: 0; top: 4px; }
.strip { margin-top: -3px; }
.gallery { position: relative; flex: 1; min-width: 0; height: 60px; margin: 3px 0 0 7px; background: #fff; border: 1px solid #ababab; display: flex; justify-content: flex-end; }
.peek-text { position: absolute; left: 158px; top: 8px; }
.style-item { display: flex; flex-direction: column; justify-content: center; align-items: flex-end; gap: 8px; padding-right: 8px; width: 68px; color: #666; }
.style-item b { color: #000; font-size: 12px; width: 60px; overflow: hidden; }
.style-item span { margin-right: 12px; }
.gallery-nav { width: 14px; border-left: 1px solid #ababab; display: flex; flex-direction: column; color: #666; }
.gallery-nav button { flex: 1; border-top: 1px solid #ababab; }
.gallery-nav .off { border-top: 0; background: #e6e6e6; color: #aaa; }
.styles-end { width: 9px; margin-right: -1px; display: flex; align-items: flex-end; padding-bottom: 4px; border-right: 1px solid #d2d2d2; }
.edit-group { width: 79px; padding-left: 7px; }
.word-ribbon .fold { width: 9px; margin-left: 17px; }
.tiny { font: 700 9px "Open Sans", sans-serif; fill: #555; }

.task-ribbon { display: flex; height: 93px; padding-top: 3px; background: #f1f1f1; border-bottom: 1px solid #d2d2d2; }
.tags-group .rows { padding: 0 11px 0 7px; }
.at { font: 17px "Open Sans", sans-serif; fill: #555; }

/* Word document area */
.document { flex: 1; padding: 4px; display: flex; flex-direction: column; justify-content: space-between; }
.ruler-corner { width: 16px; height: 16px; background: #fafafa; border: 1px solid #ddd; display: flex; align-items: center; justify-content: center; }
.v-ruler { width: 12px; margin: 0 0 -4px 1px; }
.v-margin { height: 92px; background: #c6c6c6; }
.v-page { height: 18px; background: #fff; text-align: center; line-height: 22px; }
.status { display: flex; align-items: center; gap: 19px; height: 22px; padding: 0 8px 2px 7px; background: #f1f1f1; border-top: 1px solid #c6c6c6; }
.zoomer { margin-left: auto; display: flex; align-items: center; gap: 4px; }
.zoomer button { width: 10px; font-size: 16px; font-weight: 700; }
.zoomer span { margin-left: 10px; }
.zoomer input { appearance: none; width: 100px; height: 16px; margin: 0; background: linear-gradient(#aaa, #aaa) center / 100% 1px no-repeat; }
.zoomer input::-webkit-slider-thumb { appearance: none; width: 4px; height: 11px; background: #666; }

/* Task window */
.task-window { position: absolute; inset: 73px 186px 0 156px; display: flex; flex-direction: column; background: #fff; border: 1px solid #0072c6; box-shadow: 0 0 8px rgba(0, 0, 0, 0.45); }
.task-form { flex: 1; display: flex; flex-direction: column; gap: 5px; padding: 12px 7px 8px; color: #666; }
.head { display: flex; align-items: flex-start; gap: 11px; }
.send { width: 49px; height: 75px; flex-direction: column; gap: 11px; padding-top: 9px; padding-right: 5px; background: #fdfdfd; border: 1px solid #ababab; color: #444; }
.fields { flex: 1; }
.line { display: flex; align-items: center; height: 23px; }
.line-to { height: 26px; }
.line-gap { margin-top: 8px; }
.line-near { margin-top: 4px; }
.line label { width: 70px; line-height: 18px; padding-bottom: 2px; }
.line .second { width: 56px; margin-left: 11px; }
.line .percent { width: 81px; margin-left: 11px; }
.to { width: 59px; height: 26px; margin-right: 11px; background: #fdfdfd; border: 1px solid #ababab; color: #444; }
input, select, textarea { outline: none; border-radius: 0; }
.wide, .amount, .date, .drop select, .notes { border: 1px solid #ababab; background: #fff; color: #000; }
.wide { flex: 1; min-width: 0; height: 23px; padding: 0 3px 4px; }
.wide.to-input { height: 21px; }
.date { display: flex; align-items: center; width: 189px; height: 23px; padding-right: 3px; }
.date input { flex: 1; min-width: 0; border: 0; padding: 0 3px 4px; background: none; }
.drop { position: relative; width: 101px; height: 21px; display: flex; }
.drop-long { width: 182px; }
.drop select { appearance: none; width: 100%; padding: 0 3px 1px; line-height: 16px; }
.drop::after { content: ""; position: absolute; right: 5px; top: 9px; border: 3px solid transparent; border-top-color: #666; border-bottom: 0; pointer-events: none; }
.amount { width: 49px; height: 23px; padding: 0 3px 4px; }
.spin { display: flex; flex-direction: column; width: 17px; height: 21px; }
.spin button { flex: 1; border: 1px solid #ababab; border-left: 0; }
.spin button + button { border-top: 0; }
.check { display: flex; align-items: center; height: 17px; margin-top: 6px; gap: 5px; }
.check-first { margin-top: 9px; }
.check label { height: 16px; line-height: 14px; }
.check .focus { outline: 1px dotted #000; }
.check input { appearance: none; width: 13px; height: 13px; margin: 0; border: 1px solid #ababab; background: #fff; display: flex; align-items: center; justify-content: center; }
.check input.mixed { background: #bcbcbc; }
.check input:checked::after { content: ""; width: 4px; height: 8px; margin-top: -2px; border: solid #777; border-width: 0 2px 2px 0; transform: rotate(42deg); }
.notes { flex: 1; resize: none; border-color: #a0a4b4; margin: 0; }

/* Windows taskbar */
.taskbar { display: flex; height: 40px; background: linear-gradient(97deg, #c08c3c 0, #b9822b 9%, #bd8434 44%, #b97329 49%, #9e7c3c 49.200%, #9e7c3c 55.200%, #bba16c 55.400%, #b89d68 85%, #b3935a 86%, #b68c2c 89%, #bd9435 100%); color: #fff; }
.start { width: 51px; }
.store { width: 60px; }
.apps { display: flex; gap: 2px; padding: 1px 0 1px 3px; }
.apps button { position: relative; width: 60px; background: rgba(220, 190, 140, 0.4); border: 1px solid #d9bd92; box-shadow: 0 0 0 1px rgba(110, 75, 25, 0.6); }
.apps .stack { padding-right: 5px; }
.apps .stack::after { content: ""; position: absolute; right: 3px; top: 0; bottom: 0; width: 2px; border-left: 1px solid #8b6630; border-right: 1px solid #d9bd92; }
.apps .current { background: rgba(240, 225, 200, 0.6); border-color: #fff; }
.tray { margin-left: auto; display: flex; padding-right: 13px; }
.tray button { width: 24px; padding-top: 2px; }
.clock { width: 60px; margin-left: 10px; display: flex; flex-direction: column; align-items: center; padding-top: 5px; }
```
